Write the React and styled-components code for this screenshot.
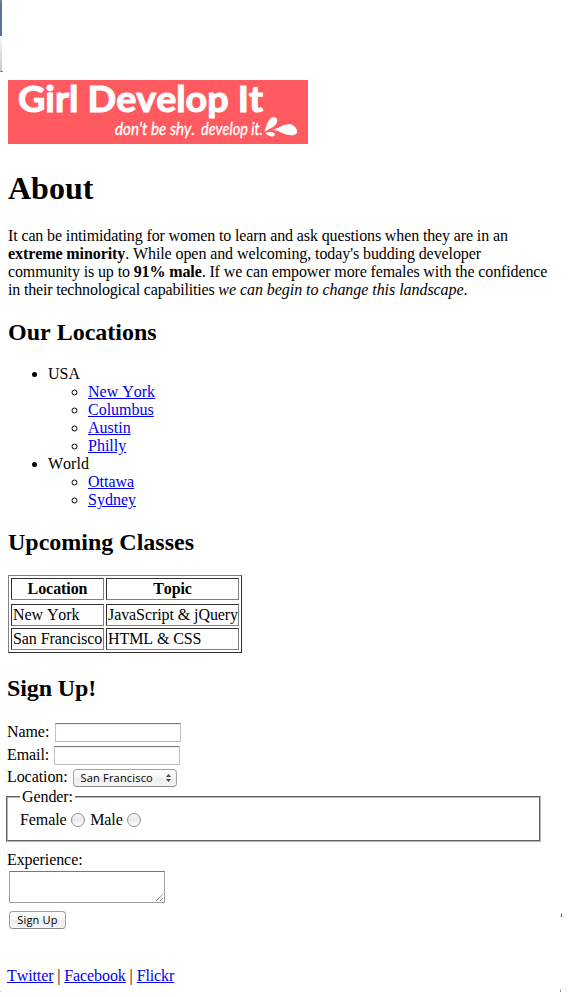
import React from "react";
import styled, { createGlobalStyle } from "styled-components";

const GlobalStyle = createGlobalStyle`
  html, body { margin: 0; background: #fff; }
  body {
    color: #000;
    font: 16px/18px "Liberation Serif", "Times New Roman", serif;
    font-kerning: none;
    letter-spacing: -0.08px;
  }
`;

const Page = styled.div`
  position: relative;
  box-sizing: border-box;
  width: 578px;
  height: 997px;
  padding: 80px 0 0 8px;
  overflow: hidden;
`;

const EdgeMark = styled.i`
  position: absolute;
  left: ${(p) => p.$x}px;
  top: ${(p) => p.$y}px;
  width: ${(p) => p.$w}px;
  height: ${(p) => p.$h}px;
  background: ${(p) => p.$fill};
`;

const Logo = styled.svg`
  display: block;
  width: 300px;
  height: 64px;
  overflow: visible;
  letter-spacing: 0;
`;

const Title = styled.h1`
  margin: 26px 0 21px;
  font-size: 32px;
  line-height: 36px;
  letter-spacing: 0;
`;

const Heading = styled.h2`
  margin: 19px 0;
  font-size: 24px;
  line-height: 28px;
  letter-spacing: 0;
`;

const Intro = styled.p`
  margin: 0;
`;

const IntroLine = styled.span`
  display: block;
  white-space: nowrap;
  letter-spacing: ${(p) => p.$tracking}px;
`;

const Emphasis = styled.em`
  letter-spacing: -0.05px;
`;

const List = styled.ul`
  margin: 0;
  padding-left: 40px;
  list-style-type: ${(p) => (p.$nested ? "circle" : "disc")};
  letter-spacing: 0;
`;

const Link = styled.a`
  color: #0000ee;
  text-decoration: underline;
`;

const Table = styled.table`
  display: flex;
  flex-direction: column;
  gap: 4px;
  box-sizing: border-box;
  width: 234px;
  padding: 2px;
  border: 1px solid;
  border-color: #808080 #303030 #303030 #808080;
`;

const TableGroup = styled.tbody`
  display: flex;
  flex-direction: column;
  gap: 2px;
`;

const TableRow = styled.tr`
  display: grid;
  grid-template-columns: 93px 133px;
  gap: 2px;
`;

const Cell = styled.td`
  box-sizing: border-box;
  height: 22px;
  padding: 1px;
  border: 1px solid;
  border-color: #303030 #808080 #808080 #303030;
  text-align: ${(p) => (p.$header ? "center" : "left")};
  font-weight: ${(p) => (p.$header ? "bold" : "normal")};
  white-space: nowrap;
`;

const Form = styled.form`
  margin: 21px 0 0 -1px;
`;

const FormHeading = styled(Heading)`
  margin: 0 0 21px;
  letter-spacing: -0.1px;
`;

const Field = styled.div`
  display: flex;
  align-items: flex-start;
  gap: ${(p) => p.$gap}px;
  height: ${(p) => p.$height}px;
`;

const Label = styled.label`
  margin-top: ${(p) => p.$drop || 0}px;
`;

const TextInput = styled.input`
  box-sizing: border-box;
  width: 126px;
  height: 19px;
  margin: 0 0 0 -0.6px;
  padding: 1px 3px;
  border: 1px solid;
  border-color: #7b7b7b #c0c0c0 #bababa;
  border-radius: 0;
  background: #fff;
  box-shadow: inset 0 1px #ededed;
  outline: none;
`;

const SelectBox = styled.button`
  display: flex;
  align-items: center;
  justify-content: space-between;
  box-sizing: border-box;
  width: 104px;
  height: 18px;
  padding: 0 5px 0 7px;
  border: 1px solid #a3a3a3;
  border-bottom-color: #8c8c8c;
  border-radius: 4px;
  background: linear-gradient(#fff, #f4f4f4 50%, #ececec 51%, #f5f5f5);
  color: #000;
  font: 500 11px/14px "Open Sans", sans-serif;
  letter-spacing: 0.18px;
  white-space: nowrap;
`;

const GenderBox = styled.fieldset`
  position: relative;
  box-sizing: border-box;
  width: 535px;
  height: 46px;
  margin: 8px 0 0 -1px;
  padding: 13px 0 0 12px;
  border: 2px groove #b5b5b5;
  display: flex;
  align-items: flex-start;
`;

const Legend = styled.div`
  position: absolute;
  left: 12px;
  top: -10px;
  padding: 0 2px;
  background: #fff;
`;

const Radio = styled.input`
  appearance: none;
  box-sizing: border-box;
  width: 14px;
  height: 14px;
  margin: 2px 5px 0 4.5px;
  border: 1px solid #8e8e8e;
  border-radius: 50%;
  background: linear-gradient(#fafafa, #e9e9e9 48%, #fff);
`;

const TextAreaFrame = styled.div`
  display: flex;
  align-items: flex-end;
  justify-content: flex-end;
  box-sizing: border-box;
  width: 156px;
  height: 32px;
  margin: 2px 0 8px 2px;
  border: 1px solid #a0a0a0;
  border-top-color: #777;
`;

const SubmitButton = styled.button`
  display: block;
  box-sizing: border-box;
  width: 57px;
  height: 18px;
  margin-left: 2px;
  padding: 0;
  border: 1px solid #a0a0a0;
  border-bottom-color: #898989;
  border-radius: 4px;
  background: linear-gradient(#fff, #f4f4f4 50%, #ebebeb 51%, #f6f6f6);
  color: #000;
  font: 500 11px/14px "Open Sans", sans-serif;
  letter-spacing: 0.2px;
`;

const Footer = styled.footer`
  margin: 38px 0 0 -1px;
  letter-spacing: -0.1px;
`;

const edgeMarks = [
  { $x: 0, $y: 0, $w: 2, $h: 36, $fill: "linear-gradient(#72887f 0 1px, #5d7796 2px, #4f75a2)" },
  { $x: 0, $y: 37, $w: 2, $h: 34, $fill: "linear-gradient(#f4f4f4, #c9c9c9)" },
  { $x: 0, $y: 71, $w: 3, $h: 1, $fill: "#858585" },
  { $x: 561, $y: 913, $w: 1, $h: 4, $fill: "linear-gradient(#bbb, #173130)" },
  { $x: 560, $y: 989, $w: 1, $h: 3, $fill: "linear-gradient(#ddd, #648078)" },
  { $x: 0, $y: 991, $w: 1, $h: 1, $fill: "#b0b0b0" },
];

const regions = [
  { name: "USA", cities: ["New York", "Columbus", "Austin", "Philly"] },
  { name: "World", cities: ["Ottawa", "Sydney"] },
];

const classes = [
  ["New York", "JavaScript & jQuery"],
  ["San Francisco", "HTML & CSS"],
];

function BrandLogo() {
  return (
    <Logo viewBox="0 0 300 64">
      <rect width="300" height="64" fill="#ff5a60" />
      <g fill="#fff">
        <text x="10" y="31.5" fontFamily="Lato, sans-serif" fontWeight="700" fontSize="36" stroke="#fff" strokeWidth="1.1" textLength="245" lengthAdjust="spacingAndGlyphs">Girl Develop It</text>
        <text x="107" y="55" fontFamily="Lato, sans-serif" fontStyle="italic" fontSize="17" stroke="#fff" strokeWidth=".3" textLength="80" lengthAdjust="spacingAndGlyphs">don't be shy.</text>
        <text x="193" y="55" fontFamily="Lato, sans-serif" fontStyle="italic" fontSize="17" stroke="#fff" strokeWidth=".3" textLength="62" lengthAdjust="spacingAndGlyphs">develop it.</text>
        <path d="M256 52C259 46 260 37 266 37C271 38 270 44 265 47C262 49 259 50 256 52Z" />
        <path d="M264 50C271 48 276 44 282 44C287 45 290 50 289 53C286 57 278 55 274 53C271 51 268 50 264 50Z" />
        <path d="M257 53C261 52 265 51 267 54C266 58 261 57 257 53Z" />
      </g>
    </Logo>
  );
}

export default function App() {
  return (
    <>
      <GlobalStyle />
      <Page>
        {edgeMarks.map((mark, i) => <EdgeMark key={i} {...mark} />)}
        <BrandLogo />
        <Title>About</Title>
        <Intro>
          <IntroLine $tracking={-0.125}>It can be intimidating for women to learn and ask questions when they are in an</IntroLine>
          <IntroLine $tracking={-0.09}><b>extreme minority</b>. While open and welcoming, today's budding developer</IntroLine>
          <IntroLine $tracking={-0.12}>community is up to <b>91% male</b>. If we can empower more females with the confidence</IntroLine>
          <IntroLine $tracking={-0.18}>in their technological capabilities <Emphasis>we can begin to change this landscape</Emphasis>.</IntroLine>
        </Intro>
        <Heading>Our Locations</Heading>
        <List>
          {regions.map((region) => (
            <li key={region.name}>
              {region.name}
              <List $nested>
                {region.cities.map((city) => <li key={city}><Link href="#">{city}</Link></li>)}
              </List>
            </li>
          ))}
        </List>
        <Heading>Upcoming Classes</Heading>
        <Table>
          <TableGroup as="thead">
            <TableRow>
              <Cell as="th" $header>Location</Cell>
              <Cell as="th" $header>Topic</Cell>
            </TableRow>
          </TableGroup>
          <TableGroup>
            {classes.map(([place, topic]) => (
              <TableRow key={place}><Cell>{place}</Cell><Cell>{topic}</Cell></TableRow>
            ))}
          </TableGroup>
        </Table>
        <Form>
          <FormHeading>Sign Up!</FormHeading>
          <Field $gap={6} $height={23}><Label>Name:</Label><TextInput aria-label="Name" /></Field>
          <Field $gap={5} $height={23}><Label>Email:</Label><TextInput aria-label="Email" /></Field>
          <Field $gap={5} $height={19}>
            <Label $drop={-1}>Location:</Label>
            <SelectBox type="button">
              San Francisco
              <svg width="5" height="8" viewBox="0 0 5 8" fill="#444"><path d="M0 3L2.5 0L5 3ZM0 5H5L2.5 8Z" /></svg>
            </SelectBox>
          </Field>
          <GenderBox>
            <Legend>Gender:</Legend>
            <Label>Female</Label><Radio type="radio" name="gender" />
            <Label>Male</Label><Radio type="radio" name="gender" />
          </GenderBox>
          <Label as="div" $drop={9}>Experience:</Label>
          <TextAreaFrame>
            <svg width="9" height="9" viewBox="0 0 9 9" stroke="#555" strokeWidth="1" strokeDasharray="1.2 .4"><path d="M1 8L8 1M5 8L8 5" /></svg>
          </TextAreaFrame>
          <SubmitButton type="button">Sign Up</SubmitButton>
        </Form>
        <Footer>
          <Link href="#">Twitter</Link> | <Link href="#">Facebook</Link> | <Link href="#">Flickr</Link>
        </Footer>
      </Page>
    </>
  );
}
